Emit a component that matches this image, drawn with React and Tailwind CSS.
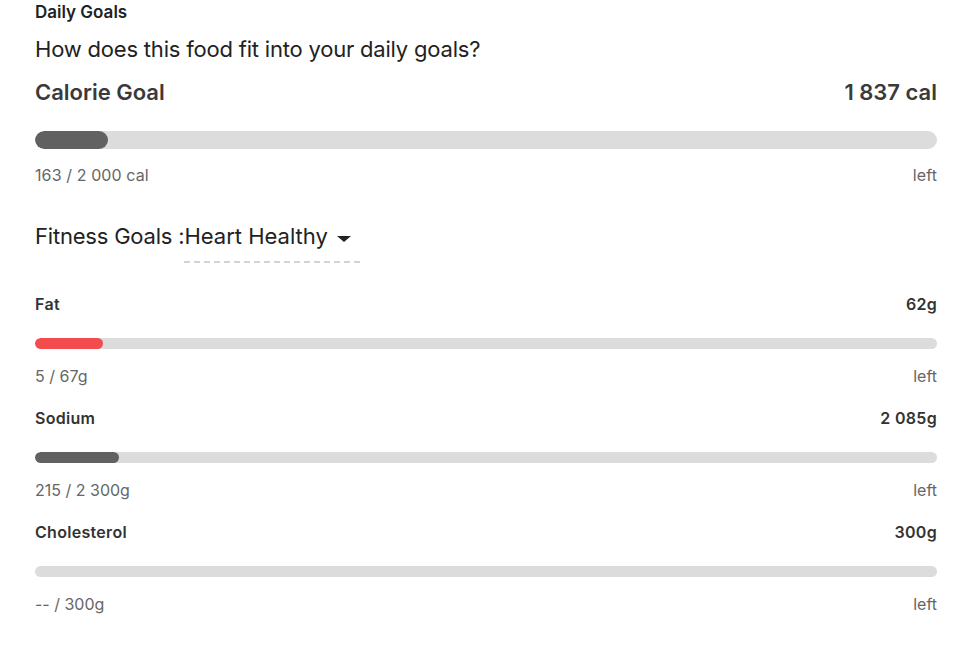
import React from "react";

function Row({ label, value, pct, color, sub }) {
  return (
    <div className="flex flex-col">
      <div className="flex justify-between items-center h-[22px] text-[16px] font-semibold text-[#333] tracking-[0.3px]">
        <span>{label}</span>
        <span>{value}</span>
      </div>
      <div className="mt-[23px] h-[11px] w-full rounded-full bg-[#dcdcdc] overflow-hidden">
        <div className="h-full rounded-full" style={{ width: pct, background: color }} />
      </div>
      <div className="mt-[15px] flex justify-between items-center h-[24px] text-[16px] text-[#666]">
        <span>{sub}</span>
        <span>left</span>
      </div>
    </div>
  );
}

export default function App() {
  return (
    <div className="w-[965px] h-[645px] bg-white pl-[35px] pr-[28px] font-['Inter',sans-serif]">
      <div className="h-[24px] pt-[1px] text-[17px] font-semibold text-[#222] leading-[22px]">Daily Goals</div>
      <div className="mt-[11px] h-[28px] text-[22px] text-[#222] leading-[28px] tracking-[-0.2px]">
        How does this food fit into your daily goals?
      </div>
      <div className="mt-[16px] flex justify-between items-center h-[26px] text-[22px] font-semibold text-[#3a3a3a]">
        <span>Calorie Goal</span>
        <span>1 837 cal</span>
      </div>
      <div className="mt-[26px] h-[18px] w-full rounded-full bg-[#dcdcdc] overflow-hidden">
        <div className="h-full rounded-full bg-[#616161]" style={{ width: "8.1%" }} />
      </div>
      <div className="mt-[14px] flex justify-between items-center h-[24px] text-[16px] text-[#666] tracking-[0.1px]">
        <span>163 / 2 000 cal</span>
        <span>left</span>
      </div>
      <div className="mt-[34px] flex items-start text-[22px] text-[#222]">
        <span className="leading-[30px] tracking-[-0.2px]">Fitness Goals :</span>
        <div className="flex flex-col">
          <div className="flex items-center leading-[30px]">
            <span>Heart Healthy</span>
            <svg width="14" height="6" viewBox="0 0 14 6" className="ml-[9px] mt-[6px]">
              <polygon points="0,0 14,0 7,6" fill="#222" />
            </svg>
          </div>
          <div className="mt-[10px] h-[2px] w-[179px] bg-[repeating-linear-gradient(to_right,#d4d4d4_0_6px,transparent_6px_10px)]" />
        </div>
      </div>
      <div className="mt-[30px] flex flex-col gap-[19px]">
        <Row label="Fat" value="62g" pct="7.5%" color="#f44b4f" sub="5 / 67g" />
        <Row label="Sodium" value="2 085g" pct="9.3%" color="#616161" sub="215 / 2 300g" />
        <Row label="Cholesterol" value="300g" pct="0%" color="#616161" sub="-- / 300g" />
      </div>
    </div>
  );
}
